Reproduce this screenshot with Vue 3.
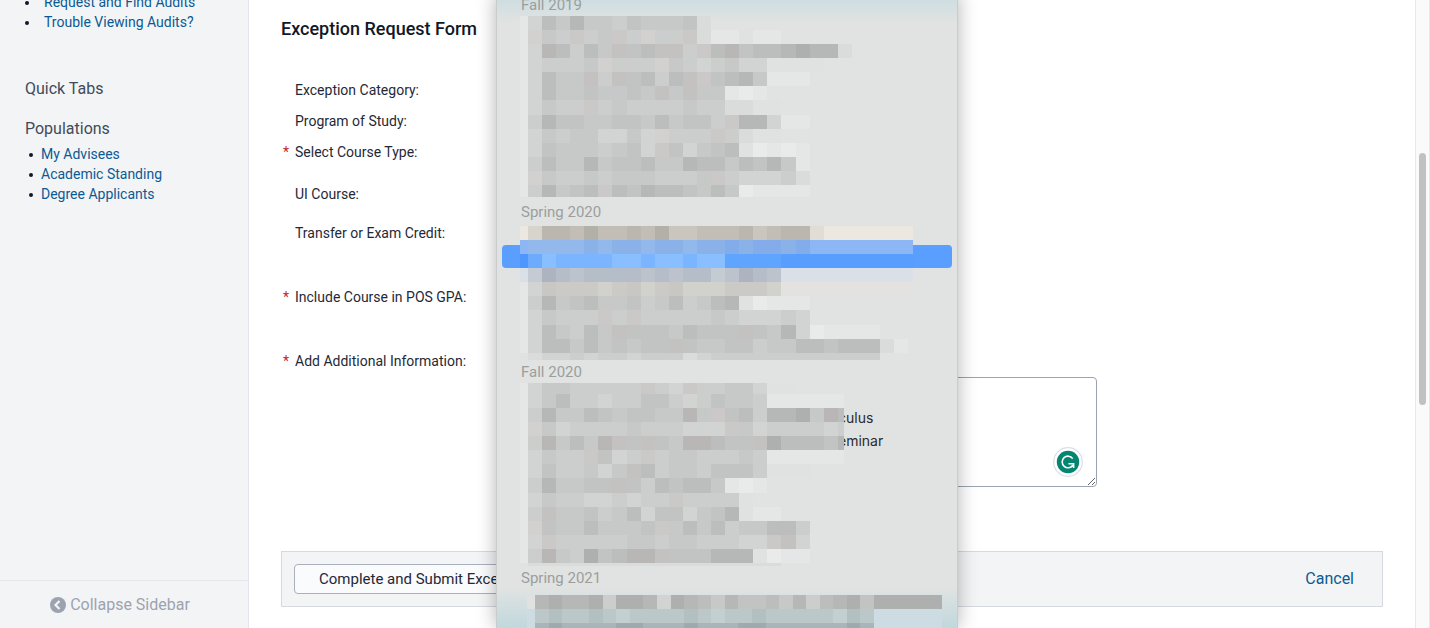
<script setup>
const palette = {
  0: '#aeb0af', 1: '#b6b8b7', 2: '#bcbebd', 3: '#c2c4c3', 4: '#c7c9c8', 5: '#cccecd',
  6: '#d2d4d3', 7: '#dadcdb', 8: '#e0e2e1', 9: '#e5e7e6', w: '#e9ebea',
  p: '#c3c2c1', q: '#cac9c8', r: '#b8b7b6', s: '#d2d1d0',
  B: '#b3b0aa', C: '#bcb6b0', D: '#c2beb7', E: '#cac5be', F: '#d7d4cd', G: '#ece7e1', H: '#e1ddd6',
  J: '#92b8ec', K: '#8bb1e9', L: '#83acea', M: '#8cb7f4',
  N: '#4d97fe', O: '#6dabfe', P: '#89beff', Q: '#7cb5ff', R: '#5fa5ff', S: '#589eff',
  T: '#dae0e7', U: '#c5cbd2', V: '#adb4bf', W: '#b5bdc8', X: '#bcc3cc',
  a: '#d2d2cd', c: '#cccac7', d: '#c8c7c4', e: '#e4e2e0',
  f: '#bbc7c9', g: '#b3c0c2', h: '#c3cfd1', i: '#cddce2', k: '#a9b6b9', l: '#9eabae'
}

function mosaic({ rows, lead = 8, cell = 14.08, first = 14.08, width, height }) {
  const cells = []
  let y = 0
  rows.forEach((row, r) => {
    const bottom = first + r * 14.08
    const top = Math.round(y)
    const h = Math.round(bottom) - top
    let x = 0
    row.split('').forEach((ch, i) => {
      const right = lead + i * cell
      const left = Math.round(x)
      cells.push({ x: left, y: top, w: Math.round(right) - left, h, fill: palette[ch] })
      x = right
    })
    y = bottom
  })
  return { cells, width, height }
}

const fall2019 = mosaic({
  width: 393, height: 181,
  rows: [
    '96241445344437', '9s45q54q5s55q799899', '96r2524p32pp5q2r32210117', '965554s555s45654668888',
    '96244p5p3252pq3214999', '9624434434p4p449w9', '96455q5455554557788', '95133443342433 5q11699'.replace(' ', ''),
    '9645446646s555q5788', '9634445436q364328w9w9', '952441433244122423149', '9s455454445554q566657',
    '951432q231223424w9999'
  ]
})
const spring2020 = mosaic({
  width: 393, height: 134,
  rows: [
    'GFCCDBDDCDBEEDDDCEDCCHGGGGGGG', 'MJJJJKJKKJKKJKKLKLLKLMMMMMMMM', 'NOPQQQQPPQPPQPPRRRRSSSSSSSSSS',
    'TUVWXWWWWXWXWWUXVWXTTTTTTTTTT', '96dcccacdacdaaacccaeeeeeeeeee', '95143244354254218w999',
    '964555q5q555554566656', '9624524p33342333p3416w9999', '96224243433p3443354422322279', '87665655655576555555555555'
  ]
})
const fall2020 = mosaic({
  width: 324, height: 183, first: 11,
  rows: [
    '964455555q56q5544688', '964255655335653445999999', '951442343344r4q3251104r2', '9s4655554555666q46555565',
    '95r424rp3p34rr233p022231', '96455q365q54455545999999', '96355464p254453335888', '9514433p35232249w9',
    '96455665655q55558', '95p4435426336431899', '9s34424443q4242544225', '96q555554454455566qp6',
    '95r45032rrp3331118w99', '8777777777777777777'
  ]
})
const spring2021 = mosaic({
  width: 426, height: 40, cell: 13.56, lead: 8,
  rows: [
    '8101105001601241332415210300000', 'ifgffgfhffffgfhffgfffffhgfiiiii', 'iklkkkkllkkklkkkllkkkkkklkiiiii'
  ]
})

const fields = [
  { text: 'Exception Category:', size: 'compact' },
  { text: 'Program of Study:', size: 'compact' },
  { text: 'Select Course Type:', size: 'medium', required: true },
  { text: 'UI Course:', size: 'short' },
  { text: 'Transfer or Exam Credit:', size: 'tall' },
  { text: 'Include Course in POS GPA:', size: 'tall', required: true }
]
</script>

<template>
  <div class="page">
    <aside class="sidebar">
      <ul class="links help">
        <li><a href="#">Request and Find Audits</a></li>
        <li><a href="#">Trouble Viewing Audits?</a></li>
      </ul>
      <h2 class="quick">Quick Tabs</h2>
      <h2>Populations</h2>
      <ul class="links">
        <li><a href="#">My Advisees</a></li>
        <li><a href="#">Academic Standing</a></li>
        <li><a href="#">Degree Applicants</a></li>
      </ul>
      <button class="collapse" type="button">
        <svg width="16" height="16" viewBox="0 0 16 16" aria-hidden="true">
          <circle cx="8" cy="8" r="8" fill="#9ca3af" />
          <path d="M9.5 4 5.5 8l4 4" fill="none" stroke="#f3f4f6" stroke-width="2.2" />
        </svg>
        Collapse Sidebar
      </button>
    </aside>

    <main class="content">
      <form @submit.prevent>
        <h1>Exception Request Form</h1>
        <div v-for="field in fields" :key="field.text" class="row" :class="field.size">
          <span class="star">{{ field.required ? '*' : '' }}</span>
          <span>{{ field.text }}</span>
        </div>
        <div class="row info">
          <span class="star">*</span>
          <label for="additional">Add Additional Information:</label>
          <div class="editor">
            <textarea id="additional"></textarea>
            <svg class="badge" width="30" height="30" viewBox="0 0 30 30" aria-hidden="true">
              <circle cx="15" cy="15" r="14.3" fill="#fff" stroke="#dcdde8" stroke-width="1.2" />
              <circle cx="15" cy="15" r="11.2" fill="#038570" />
              <path d="M19.7 11.6A5.8 5.8 0 1 0 19.8 18.2M15.4 16.8H20.6V21" fill="none" stroke="#fff" stroke-width="1.6" />
            </svg>
          </div>
        </div>
        <div class="actions">
          <button class="submit" type="submit">Complete and Submit Exception</button>
          <a href="#">Cancel</a>
        </div>
      </form>
    </main>

    <div class="track"><div class="thumb"></div></div>

    <div class="menu" role="listbox" aria-label="UI Course">
      <div class="term">Fall 2019</div>
      <svg class="mosaic" :width="fall2019.width" :height="fall2019.height" aria-hidden="true">
        <rect v-for="(c, i) in fall2019.cells" :key="i" :x="c.x" :y="c.y" :width="c.w" :height="c.h" :fill="c.fill" />
      </svg>
      <div class="term second">Spring 2020</div>
      <div class="group">
        <div class="selected" role="option" aria-selected="true"></div>
        <svg class="mosaic" :width="spring2020.width" :height="spring2020.height" aria-hidden="true">
          <rect v-for="(c, i) in spring2020.cells" :key="i" :x="c.x" :y="c.y" :width="c.w" :height="c.h" :fill="c.fill" />
        </svg>
      </div>
      <div class="term">Fall 2020</div>
      <div class="group">
        <div class="courses">
          <div role="option">culus</div>
          <div role="option">eminar</div>
        </div>
        <svg class="mosaic" :width="fall2020.width" :height="fall2020.height" aria-hidden="true">
          <rect v-for="(c, i) in fall2020.cells" :key="i" :x="c.x" :y="c.y" :width="c.w" :height="c.h" :fill="c.fill" />
        </svg>
      </div>
      <div class="term">Spring 2021</div>
      <svg class="mosaic last" :width="spring2021.width" :height="spring2021.height" aria-hidden="true">
        <rect v-for="(c, i) in spring2021.cells" :key="i" :x="c.x" :y="c.y" :width="c.w" :height="c.h" :fill="c.fill" />
      </svg>
    </div>
  </div>
</template>

<style>
body { margin: 0; overflow: hidden; }
</style>

<style scoped>
* { box-sizing: border-box; }
.page {
  position: relative;
  display: flex;
  height: 100vh;
  overflow: hidden;
  background: #fff;
  color: #1f2937;
  font: 14px/20px Roboto, "Liberation Sans", sans-serif;
}
a { color: #0b5a94; text-decoration: none; }
button { font-family: inherit; cursor: pointer; }
.sidebar {
  display: flex;
  flex-direction: column;
  flex: 0 0 249px;
  background: #f3f4f6;
  border-right: 1px solid #e3e6ea;
}
.links { margin: 0; padding: 0 0 0 41px; }
.links.help { margin-top: -8px; padding-left: 44px; }
.links li { list-style: none; position: relative; }
.links li::before {
  content: "";
  position: absolute;
  left: -12px;
  top: 9px;
  width: 4px;
  height: 4px;
  border-radius: 50%;
  background: #111827;
}
.links.help li::before { left: -19px; }
h2 {
  margin: 16px 0 3px 25px;
  color: #424b5a;
  font-size: 16px;
  font-weight: 400;
  line-height: 24px;
}
h2.quick { margin: 45px 0 0 25px; }
.collapse {
  display: flex;
  align-items: center;
  justify-content: center;
  gap: 4px;
  height: 48px;
  margin-top: auto;
  padding: 0 8px 0 0;
  border: 0;
  border-top: 1px solid #e5e7eb;
  background: transparent;
  color: #9ca3af;
  font-size: 16px;
}
.content { flex: 1; min-width: 0; padding: 0 32px; }
h1 { margin: 17px 0 39px; font-size: 18px; font-weight: 500; line-height: 24px; color: #111827; }
.row { display: grid; grid-template-columns: 14px 222px 1fr; }
.star { padding-left: 2px; color: #c81e1e; }
.compact { height: 31px; }
.medium { height: 42px; }
.short { height: 39px; }
.tall { height: 64px; }
.editor { position: relative; width: 580px; margin-top: 26px; }
textarea {
  display: block;
  width: 100%;
  height: 110px;
  border: 1px solid #9aa3b0;
  border-radius: 4px;
  background: #fff;
}
.badge { position: absolute; right: 14px; bottom: 10px; }
.actions {
  display: flex;
  align-items: center;
  justify-content: space-between;
  height: 56px;
  margin-top: 64px;
  padding: 0 28px 0 12px;
  border: 1px solid #d5d9e0;
  background: #f3f4f6;
  font-size: 16px;
}
.submit {
  height: 30px;
  padding: 0 24px;
  border: 1px solid #a9b0bc;
  border-radius: 4px;
  background: #fafbfc;
  color: #1f2937;
  font-size: 15px;
}
.track {
  flex: 0 0 15px;
  padding: 153px 3px 0;
  border: solid #e8e8e8;
  border-width: 0 1px;
  background: #fafafa;
}
.thumb { height: 252px; border-radius: 4px; background: #c1c1c1; }
.menu {
  position: absolute;
  top: -7px;
  bottom: 0;
  left: 496px;
  width: 462px;
  padding-left: 23px;
  border: solid #c9cccb;
  border-width: 0 1px;
  background: linear-gradient(#cfdee1 8px, transparent 30px), linear-gradient(transparent 594px, #c0d8dd 100%), #e1e3e2;
  box-shadow: 0 0 18px rgba(0, 0, 0, .3);
  color: #9b9e9d;
  font: 15px/23px Roboto, "Liberation Sans", sans-serif;
}
.term { padding: 2px 0 0 1px; line-height: 21px; }
.term.second { margin: 3px 0; }
.group { position: relative; }
.mosaic { position: relative; display: block; overflow: hidden; }
.mosaic.last { margin-top: 6px; margin-left: 7px; }
.selected {
  position: absolute;
  top: 19px;
  left: -18px;
  right: 5px;
  height: 23px;
  border-radius: 4px;
  background: #5a9eff;
}
.courses { position: absolute; top: 23px; left: 318px; color: #2b2b2b; font-family: Inter, sans-serif; font-size: 14px; }
</style>
